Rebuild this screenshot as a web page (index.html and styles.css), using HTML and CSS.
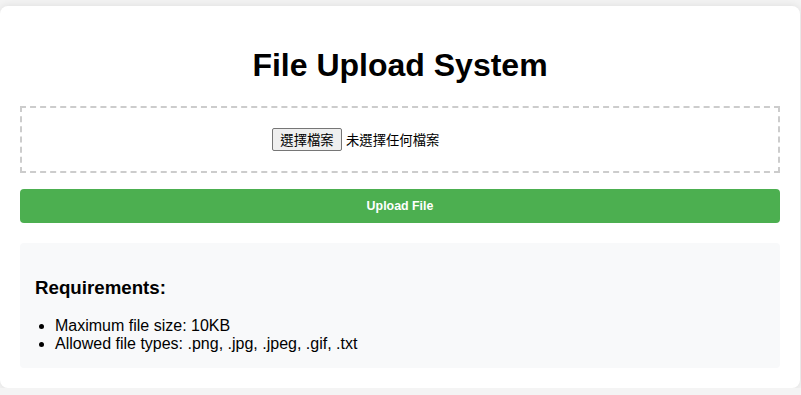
FILE: index.html
```html
<!DOCTYPE html>
<html lang="zh-Hant">
<head>
<meta charset="utf-8">
<title>File Upload System</title>
<link rel="stylesheet" href="styles.css">
</head>
<body>
<div class="container">
  <h1 class="title">File Upload System</h1>
  <div class="dropzone">
    <label class="file-input">
      <span class="file-btn">選擇檔案</span><span class="file-name">未選擇任何檔案</span>
    </label>
  </div>
  <button class="upload-btn" type="button">Upload File</button>
  <div class="requirements">
    <h3 class="req-title">Requirements:</h3>
    <ul class="req-list">
      <li>Maximum file size: 10KB</li>
      <li>Allowed file types: .png, .jpg, .jpeg, .gif, .txt</li>
    </ul>
  </div>
</div>
</body>
</html>
```
FILE: styles.css
```css
html, body {
  margin: 0;
  padding: 0;
}
body {
  background: #f4f4f4;
  font-family: "Liberation Sans", Arial, sans-serif;
  padding-top: 6px;
}
.container {
  box-sizing: border-box;
  width: 800px;
  background: #fff;
  padding: 20px;
  border-radius: 8px;
  box-shadow: 0 0 10px rgba(0, 0, 0, 0.1);
}
.title {
  text-align: center;
  font-size: 32px;
  margin: 21.44px 0;
  color: #000;
}
.dropzone {
  border: 2px dashed #ccc;
  padding: 20px;
  text-align: center;
}
.file-input {
  display: inline-flex;
  align-items: center;
  width: 256px;
  height: 23px;
  vertical-align: top;
  text-align: left;
  font-family: "Liberation Sans", "Noto Sans CJK TC", sans-serif;
  font-size: 13.33px;
  color: #000;
}
.file-btn {
  box-sizing: border-box;
  height: 23px;
  width: 70px;
  display: inline-flex;
  align-items: center;
  justify-content: center;
  background: #efefef;
  border: 1px solid #767676;
  border-radius: 2px;
  margin-right: 4px;
}
.upload-btn {
  display: block;
  width: 100%;
  margin-top: 16px;
  height: 34px;
  background: #4caf50;
  color: #fff;
  border: none;
  border-radius: 4px;
  font-family: "Liberation Sans", Arial, sans-serif;
  font-weight: bold;
  font-size: 12.4px;
}
.requirements {
  margin-top: 20px;
  background: #f8f9fa;
  border-radius: 4px;
  padding: 15px;
}
.req-title {
  font-size: 18.72px;
  margin: 18.72px 0;
}
.req-list {
  margin: 0;
  padding-left: 20px;
  font-size: 16px;
}
```
